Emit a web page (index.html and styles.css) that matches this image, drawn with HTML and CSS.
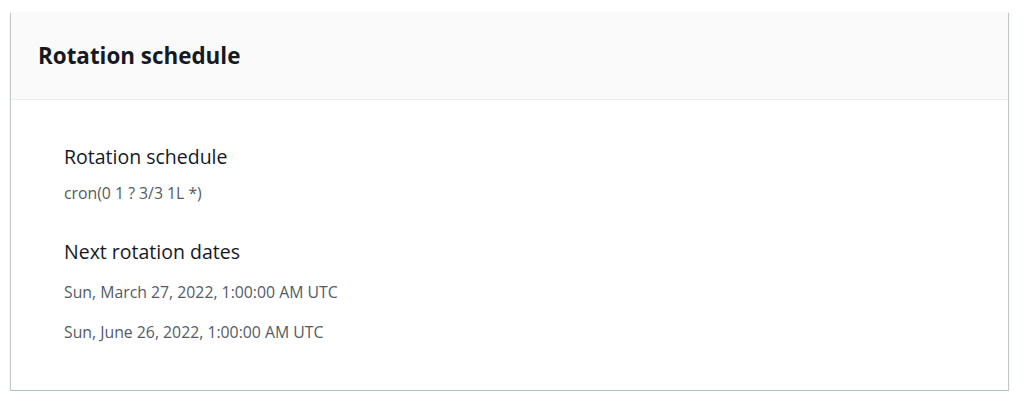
FILE: index.html
```html
<!DOCTYPE html>
<html>
<head>
<meta charset="utf-8">
<link rel="stylesheet" href="styles.css">
</head>
<body>
<div class="card">
  <div class="card-header"><h2 class="title">Rotation schedule</h2></div>
  <div class="card-body">
    <div class="field">
      <div class="label">Rotation schedule</div>
      <div class="value">cron(0 1 ? 3/3 1L *)</div>
    </div>
    <div class="field">
      <div class="label">Next rotation dates</div>
      <div class="value">Sun, March 27, 2022, 1:00:00 AM UTC</div>
      <div class="value">Sun, June 26, 2022, 1:00:00 AM UTC</div>
    </div>
  </div>
</div>
</body>
</html>
```
FILE: styles.css
```css
html, body { margin: 0; padding: 0; background: #fff; }
body { padding: 12px 16px 0 11px; font-family: "Open Sans", "Liberation Sans", sans-serif; color: #16191f; }
.card {
  background: #fff;
  border-bottom: 1px solid #b4bdbe;
  box-shadow: 0 1px 1px 0 rgba(0,28,36,.3), 1px 1px 1px 0 rgba(0,28,36,.2), -1px 1px 1px 0 rgba(0,28,36,.2);
  height: 379px;
  box-sizing: border-box;
}
.card-header {
  background: #fafafa;
  border-bottom: 1px solid #eaeded;
  height: 88px;
  box-sizing: border-box;
  display: flex;
  align-items: center;
  padding-left: 27px;
}
.title { margin: 0; font-size: 22.4px; font-weight: 700; letter-spacing: 0; line-height: 30px; }
.card-body { padding: 44px 53px 0; }
.field + .field { margin-top: 35px; }
.label { font-size: 19.5px; line-height: 26px; color: #16191f; }
.value { font-size: 15.8px; line-height: 22px; color: #545b64; margin-top: 12px; }
.label + .value { margin-top: 12px; }
.field:last-child .label + .value { margin-top: 16px; }
.value + .value { margin-top: 18px; }
```
